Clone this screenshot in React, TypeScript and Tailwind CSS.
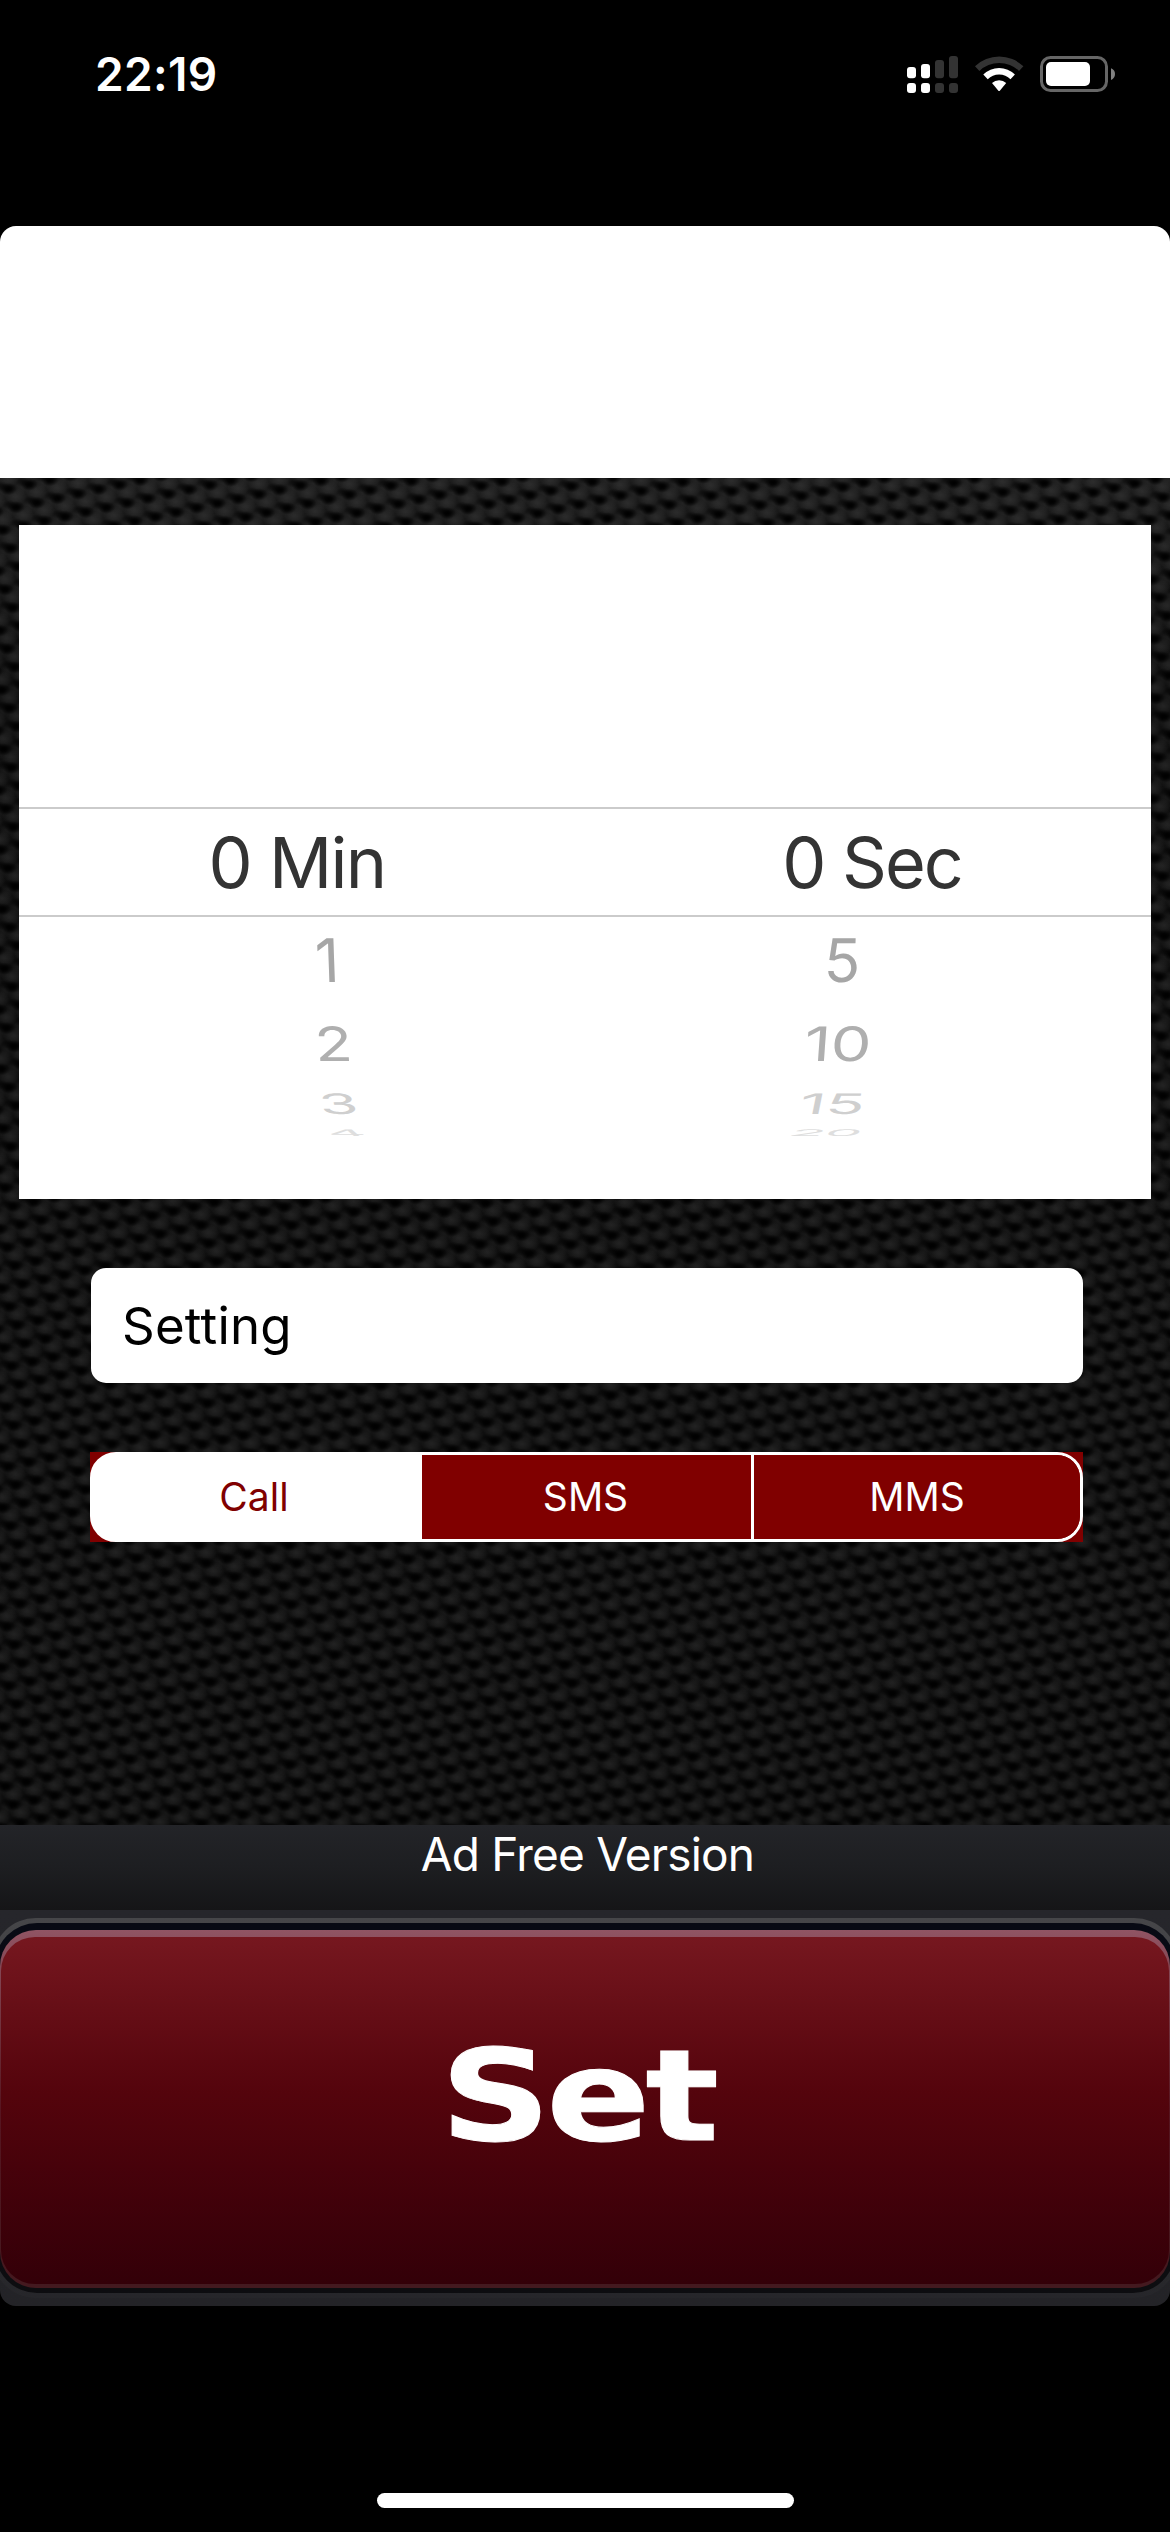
import { clsx } from "clsx";

type WheelRow = { label: string; className: string };

const ROW_STYLES = [
  "h-[85px] text-[#a6a6a6]",
  "h-[84px] text-[#afafaf]",
  "h-[35px] text-[#cfcfcf]",
  "h-[25px] text-[#dedede]",
];

const MINUTES: WheelRow[] = [
  { label: "1", className: "[transform:translateX(25px)_skewX(2deg)]" },
  { label: "2", className: "[transform:translateX(31px)_scale(1.03,0.79)_skewX(3deg)]" },
  { label: "3", className: "[transform:translateX(37px)_scale(1.05,0.47)_skewX(5deg)]" },
  { label: "4", className: "[transform:translate(43px,-1px)_scale(1,0.15)_skewX(10deg)]" },
];

const SECONDS: WheelRow[] = [
  { label: "5", className: "[transform:translateX(-26px)_skewX(-2deg)]" },
  { label: "10", className: "[transform:translateX(-30px)_scale(1.08,0.79)_skewX(-3deg)]" },
  { label: "15", className: "[transform:translateX(-36px)_scale(1.07,0.47)_skewX(-5deg)]" },
  { label: "20", className: "[transform:translate(-42px,-1px)_scale(0.96,0.15)_skewX(-10deg)]" },
];

const SEGMENTS = ["Call", "SMS", "MMS"];

// neighbouring tiles are drawn too, so soft blobs wrap over the tile edges
const WRAP = [-20, 0, 20].flatMap((x) => [-20, 0, 20].map((y) => ({ x, y })));

function StatusIcons() {
  return (
    <svg width="210" height="40" viewBox="906 54 210 40">
      <g fill="#fff">
        <rect x="907" y="67" width="9" height="11.3" rx="3" />
        <rect x="921" y="64" width="9" height="14.3" rx="3" />
        <rect x="907" y="83" width="9" height="10" rx="3" />
        <rect x="921" y="83" width="9" height="10" rx="3" />
      </g>
      <g fill="#333">
        <rect x="935" y="60" width="9" height="18.3" rx="3" />
        <rect x="949" y="56" width="9" height="22.3" rx="3" />
        <rect x="935" y="83" width="9" height="10" rx="3" />
        <rect x="949" y="83" width="9" height="10" rx="3" />
      </g>
      <path d="M975 66.3a35 35 0 0 1 48.4 0l-4.4 4.6a28.5 28.5 0 0 0-39.6 0z" fill="#333" />
      <path d="M983.3 74.6a22.5 22.5 0 0 1 31.6 0l-4.4 4.6a16.2 16.2 0 0 0-22.8 0z" fill="#fff" />
      <path d="M992 83a10.4 10.4 0 0 1 14.2 0l-6.2 7.4q-.9 1-1.8 0z" fill="#fff" />
      <rect x="1041.5" y="57.5" width="65" height="33" rx="9" fill="none" stroke="#666" strokeWidth="3" />
      <rect x="1046" y="62" width="44" height="24" rx="5" fill="#fff" />
      <path d="M1111 68.3q4 1.500 4 5.800t-4 5.800z" fill="#808080" />
    </svg>
  );
}

function CarbonTexture() {
  return (
    <svg className="absolute inset-0" width="1170" height="1347">
      <defs>
        <radialGradient id="knot">
          <stop offset="0" stopColor="#000" />
          <stop offset="0.35" stopColor="#000" stopOpacity="0.85" />
          <stop offset="1" stopColor="#000" stopOpacity="0" />
        </radialGradient>
        <radialGradient id="sheen">
          <stop offset="0" stopColor="#fff" stopOpacity="0.085" />
          <stop offset="0.5" stopColor="#fff" stopOpacity="0.05" />
          <stop offset="1" stopColor="#fff" stopOpacity="0" />
        </radialGradient>
        <linearGradient id="fade" x1="0" y1="0" x2="0" y2="1">
          <stop offset="0" stopColor="#1a1a1a" />
          <stop offset="0.15" stopColor="#101010" />
          <stop offset="1" stopColor="#0d0d0d" />
        </linearGradient>
        <pattern
          id="weave"
          width="20"
          height="20"
          patternUnits="userSpaceOnUse"
          patternTransform="matrix(1.035 -0.225 0.38 0.915 375.85 1197.1)"
        >
          {WRAP.map(({ x, y }) => (
            <g key={`${x},${y}`} transform={`translate(${x} ${y})`}>
              <ellipse cx="14.500" cy="20" rx="10" ry="9" fill="url(#sheen)" />
              <ellipse cx="3" cy="13" rx="6" ry="8" fill="url(#sheen)" opacity="0.5" />
            </g>
          ))}
          {WRAP.map(({ x, y }) => (
            <g key={`${x},${y}`} transform={`translate(${x} ${y})`}>
              <ellipse cx="11" cy="11" rx="8" ry="6.500" fill="url(#knot)" />
              <ellipse cx="6" cy="7" rx="6.500" ry="5" fill="url(#knot)" opacity="0.5" />
            </g>
          ))}
        </pattern>
      </defs>
      <rect width="1170" height="1347" fill="url(#fade)" />
      <rect width="1170" height="1347" fill="url(#weave)" />
    </svg>
  );
}

function WheelColumn({ rows }: { rows: WheelRow[] }) {
  return (
    <div className="flex flex-col">
      {rows.map((row, i) => (
        <div key={row.label} className={clsx("flex items-center justify-center", ROW_STYLES[i])}>
          <span className={clsx("text-[60px] leading-none", row.className)}>{row.label}</span>
        </div>
      ))}
    </div>
  );
}

function TimePicker() {
  return (
    <div className="h-[674px] bg-white pt-[282px]">
      <div className="grid h-[110px] grid-cols-2 items-center border-y-2 border-[#cbcbcb] text-center text-[70px] leading-none text-[#333]">
        <span className="-translate-x-[5px] translate-y-px tracking-[-1.700px]">0 Min</span>
        <span className="translate-x-[4px] translate-y-px tracking-[-2px]">0 Sec</span>
      </div>
      <div className="grid grid-cols-2">
        <WheelColumn rows={MINUTES} />
        <WheelColumn rows={SECONDS} />
      </div>
    </div>
  );
}

function TypeControl() {
  return (
    <div className="mt-[69px] ml-[71px] w-[993px] bg-[#800000]">
      <div className="grid h-[90px] grid-cols-3 overflow-hidden rounded-[26px] border-[3px] border-white bg-[linear-gradient(to_right,white_50%,#800000_50%)]">
        {SEGMENTS.map((name, i) => (
          <button
            key={name}
            className={clsx(
              "pb-[2px] text-[39px] leading-none",
              i === 0 && "bg-white pr-[7px] text-[#800000]",
              i === 1 && "bg-[#800000] pr-[2px] text-white",
              i === 2 && "border-l-[3px] border-white bg-[#800000] text-white",
            )}
          >
            {name}
          </button>
        ))}
      </div>
    </div>
  );
}

function SetButton() {
  return (
    <button className="flex h-[396px] w-full items-start overflow-hidden bg-gradient-to-b from-[#26262b] to-[#232327] pt-[8px]">
      <div className="-ml-[8px] h-[380px] w-[1186px] shrink-0 rounded-[44px] bg-gradient-to-b from-[#464649] to-[#26262a] px-[3px] py-[5px]">
        <div className="h-[370px] rounded-[42px] bg-gradient-to-b from-[#080a14] to-[#0d0d10] px-[5px] pt-[7px] pb-[5px]">
          <div className="h-[358px] rounded-[36px] bg-gradient-to-b from-[#905463] via-[#571520] to-[#43191f] px-px pt-[7px] pb-[4px]">
            <div className="flex h-[347px] items-center justify-center rounded-[34px] bg-gradient-to-b from-[#76171f] via-[#54040c] via-45% to-[#330008]">
              <span className="-translate-x-[8px] translate-y-[-14px] scale-x-[1.22] font-['DejaVu_Sans'] text-[126px] leading-none font-bold tracking-[-4px] text-white [-webkit-text-stroke:1px_white]">
                Set
              </span>
            </div>
          </div>
        </div>
      </div>
    </button>
  );
}

export default function App() {
  return (
    <div className="flex h-[2532px] w-[1170px] flex-col overflow-hidden bg-black font-['Inter',sans-serif]">
      <header className="flex h-[226px] items-start justify-between pt-[51px] pr-[54px] pl-[95px]">
        <span className="text-[46px] leading-none font-semibold tracking-[0.300px] text-white">22:19</span>
        <div className="pt-[3px]">
          <StatusIcons />
        </div>
      </header>

      <main className="h-[2080px] overflow-hidden rounded-[16px]">
        <div className="h-[252px] bg-white" />
        <section className="relative h-[1347px]">
          <CarbonTexture />
          <div className="relative px-[19px] pt-[47px]">
            <TimePicker />
            <div className="mt-[69px] ml-[72px] flex h-[115px] w-[992px] items-center rounded-[15px] bg-white pl-[31px]">
              <span className="text-[51px] leading-none tracking-[0.200px] text-black">Setting</span>
            </div>
            <TypeControl />
          </div>
        </section>
        <div className="h-[85px] bg-gradient-to-b from-[#232428] via-[#1d1e21] to-[#151517] pt-[6px] pl-[5px] text-center text-[46px] leading-none tracking-[-0.800px] text-white">
          Ad Free Version
        </div>
        <SetButton />
      </main>

      <footer className="flex flex-1 items-end justify-center pb-[24px]">
        <div className="h-[15px] w-[417px] rounded-full bg-white" />
      </footer>
    </div>
  );
}
